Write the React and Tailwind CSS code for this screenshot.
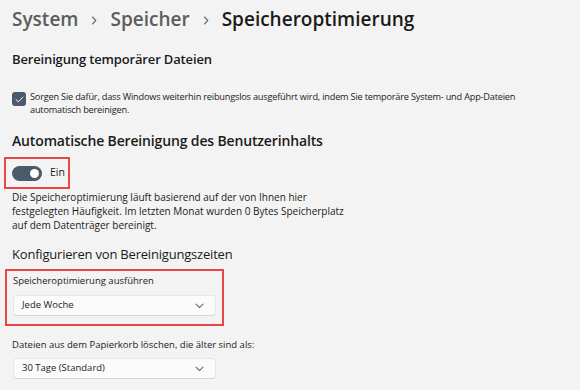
import React from "react";

const font = { fontFamily: '"Open Sans", "Noto Sans", sans-serif' };

function Chevron() {
  return (
    <svg width="9" height="6" viewBox="0 0 9 6" className="shrink-0">
      <path d="M1 1.2 L4.5 4.6 L8 1.2" fill="none" stroke="#6b6b6b" strokeWidth="1.1" strokeLinecap="round" strokeLinejoin="round" />
    </svg>
  );
}

function Crumb() {
  return (
    <svg width="6" height="9" viewBox="0 0 6 9" className="mx-[13px] mt-[3px] shrink-0">
      <path d="M1.5 1 L4.8 4.5 L1.5 8" fill="none" stroke="#6a6a6a" strokeWidth="1.1" strokeLinecap="round" strokeLinejoin="round" />
    </svg>
  );
}

function Select({ value }) {
  return (
    <div className="flex h-[21px] w-[203px] items-center justify-between rounded-[4px] border border-[#e6e6e6] border-b-[#d6d6d6] bg-[#fbfbfb] pl-[8px] pr-[11px] text-[9.5px] text-[#1b1b1b]">
      <span>{value}</span>
      <Chevron />
    </div>
  );
}

export default function App() {
  return (
    <div className="h-[390px] w-[580px] overflow-hidden bg-[#f3f3f3] pl-[12px] text-[#1b1b1b]" style={font}>
      <div className="flex h-[38px] items-center text-[19px] leading-[26px]">
        <span className="font-semibold text-[#5c5c5c]">System</span>
        <Crumb />
        <span className="font-semibold text-[#5c5c5c]">Speicher</span>
        <Crumb />
        <span className="font-semibold text-[#1a1a1a]">Speicheroptimierung</span>
      </div>

      <div className="mt-[8px] flex h-[28px] items-center text-[13px] font-semibold tracking-[-0.15px]">
        Bereinigung temporärer Dateien
      </div>

      <div className="mt-[16px] flex items-start">
        <div className="mt-[2px] flex h-[14px] w-[14px] shrink-0 items-center justify-center rounded-[3px] bg-[#4b5a6b]">
          <svg width="9" height="7" viewBox="0 0 9 7">
            <path d="M1 3.6 L3.3 5.8 L8 1.2" fill="none" stroke="#ffffff" strokeWidth="1" strokeLinecap="round" strokeLinejoin="round" />
          </svg>
        </div>
        <p className="ml-[4px] w-[520px] text-[9.2px] leading-[13px] tracking-[-0.2px]">
          Sorgen Sie dafür, dass Windows weiterhin reibungslos ausgeführt wird, indem Sie temporäre System- und App-Dateien automatisch bereinigen.
        </p>
      </div>

      <div className="mt-[12px] flex h-[24px] items-center text-[14px] font-semibold tracking-[-0.15px]">
        Automatische Bereinigung des Benutzerinhalts
      </div>

      <div className="ml-[-8px] mt-[5px] flex h-[32px] w-[66px] items-center border-2 border-[#e8474a] pl-[6px]">
        <div className="flex h-[15px] w-[30px] items-center justify-end rounded-full bg-[#4b5a6b] pr-[3px]">
          <div className="h-[9px] w-[9px] rounded-full bg-white" />
        </div>
        <span className="ml-[8px] text-[10.5px]">Ein</span>
      </div>

      <p className="mt-[1px] w-[345px] text-[10px] leading-[14px]">
        Die Speicheroptimierung läuft basierend auf der von Ihnen hier festgelegten Häufigkeit. Im letzten Monat wurden 0 Bytes Speicherplatz auf dem Datenträger bereinigt.
      </p>

      <div className="mt-[12px] flex h-[22px] items-center text-[13px] tracking-[-0.2px]">
        Konfigurieren von Bereinigungszeiten
      </div>

      <div className="ml-[-7px] mt-[3px] h-[57px] w-[219px] border-2 border-[#e8474a] pl-[6px] pt-[3px]">
        <div className="text-[9.5px] leading-[14px]">Speicheroptimierung ausführen</div>
        <div className="mt-[7px]">
          <Select value="Jede Woche" />
        </div>
      </div>

      <div className="mt-[12px] text-[9.5px] leading-[14px]">
        Dateien aus dem Papierkorb löschen, die älter sind als:
      </div>
      <div className="ml-[1px] mt-[6px]">
        <Select value="30 Tage (Standard)" />
      </div>
    </div>
  );
}
